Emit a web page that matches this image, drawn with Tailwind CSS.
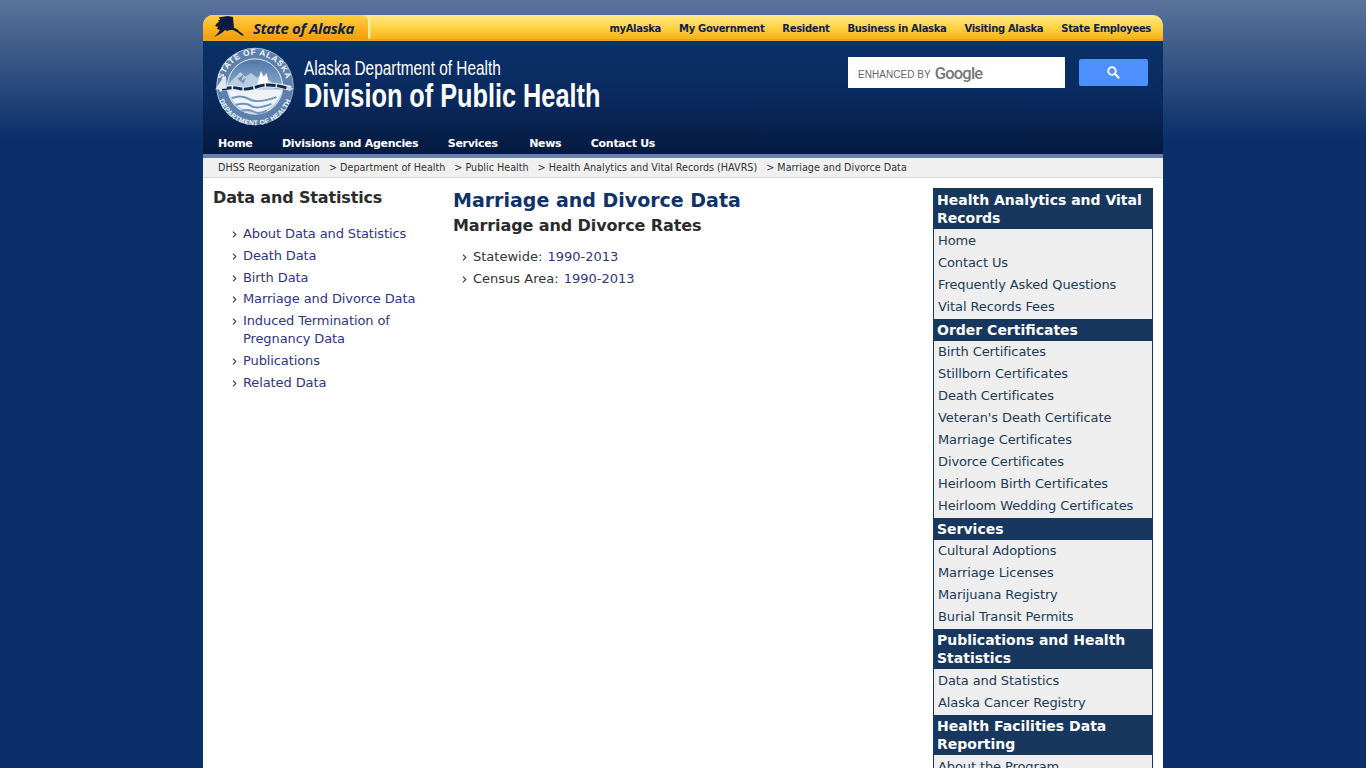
<!DOCTYPE html>
<html lang="en">
<head>
<meta charset="utf-8">
<title>Marriage and Divorce Data</title>
<script src="https://cdn.jsdelivr.net/npm/@tailwindcss/browser@4"></script>
</head>
<body class="h-[768px] overflow-hidden bg-[#0a2f6a] bg-[linear-gradient(to_bottom,#5b749b_0px,#0a2f6a_140px)] bg-no-repeat font-['DejaVu_Sans',Verdana,sans-serif]">
<div class="mx-auto w-[960px] pt-[15px]">

  <!-- top state bar -->
  <div class="relative flex h-[26px] items-center justify-end gap-[18px] overflow-hidden rounded-t-[10px] border-b-2 border-[#e0a91f] bg-[linear-gradient(to_bottom,#ffe98a,#fdd23f_55%,#f7b21a)] pr-3 pt-[3px] text-[10px] font-bold tracking-[-0.32px] text-[#10204f]">
    <div class="absolute left-0 top-0 flex h-[24px] w-[165px] items-center gap-[7px] rounded-tr-[6px] bg-[linear-gradient(to_bottom,#ffcf45,#fbb21c_60%,#f49c10)] pl-[9px] shadow-[2px_0_2px_#fff0a8]">
      <svg class="h-[23px] w-[34px] shrink-0" viewBox="0 0 34 23"><path fill="#0d1c3e" d="M9 1l7-1 5 1 1 11 3 1 3 3 3 2 1 2-3-1-4-3-4-2-3 0-3 1-2-1-2 2-3 2-6 3 4-4 2-3-3-1 1-2-3-1 2-3 2-1-1-2 2 0-1-3z"/></svg>
      <span class="mt-[2px] font-['Open_Sans',sans-serif] text-[15px] font-bold italic tracking-[-0.4px] text-[#10204f]">State of Alaska</span>
    </div>
    <a>myAlaska</a><a>My Government</a><a>Resident</a><a>Business in Alaska</a><a>Visiting Alaska</a><a>State Employees</a>
  </div>

  <!-- banner -->
  <div class="h-[113px] bg-[linear-gradient(to_bottom,#0a3169,#0a2a5e_50%,#051a40)]">
    <div class="flex h-[92px] justify-between">
      <div class="flex">
        <svg class="ml-[10px] mt-[3px] h-[82px] w-[84px] shrink-0" viewBox="0 0 84 82">
          <defs>
            <linearGradient id="ring" x1="0" y1="0" x2="1" y2="1"><stop offset="0" stop-color="#c5d3e4"/><stop offset="1" stop-color="#7f9cc0"/></linearGradient>
            <linearGradient id="sky" x1="0" y1="0" x2="0" y2="1"><stop offset="0" stop-color="#4f76a8"/><stop offset="1" stop-color="#c8d8e9"/></linearGradient>
            <path id="arcTop" d="M8 42a33.500 33.500 0 0 1 67 0"/>
            <path id="arcBot" d="M3 42a39 39 0 0 0 78 0"/>
          </defs>
          <g transform="translate(42 42.500) scale(.97) translate(-42 -41)">
            <circle cx="42" cy="41" r="40" fill="url(#ring)"/>
            <circle cx="42" cy="41" r="39" fill="#5d80ad"/>
            <circle cx="42" cy="41" r="28.500" fill="url(#sky)" stroke="#e8eef5"/>
            <path fill="#b9cce0" d="M15 38l12-12 5 5 6-4 6 5 5-3 5 4 5 3 3 5v3H15z"/>
            <path fill="#6f8db3" d="M24 33l6-4-2 6 5-3-3 6z"/>
            <path fill="#ffffff" d="M44 41l4-16 3 6 3-4 3 14z"/>
            <path fill="#eef3f8" d="M14 44h56a28.500 28.500 0 0 1-56 0z"/>
            <path fill="none" stroke="#6f93bd" stroke-width="2" d="M18 53q10-4 18 1t28-2M22 60q10-3 16 1t21-2M28 66q8-2 13 1t13-1"/>
            <path fill="none" stroke="#e8eef5" stroke-width="5" d="M5 44q10-3 20-1t20-2 34 2"/>
            <path fill="none" stroke="#12294d" stroke-width="3" stroke-dasharray="10 1.500" d="M8 44q10-3 17-1t20-2 31 2"/>
            <path fill="#dbe6f2" d="M1 44l8-12 3-2 1 13z"/>
            <path fill="#c5d3e4" d="M74 40l8 3-5 3z"/>
            <text font-family="Liberation Sans" font-size="8.500" font-weight="700" fill="#f3f7fb" letter-spacing="0.700"><textPath href="#arcTop" startOffset="50%" text-anchor="middle">STATE OF ALASKA</textPath></text>
            <text font-family="Liberation Sans" font-size="7" font-weight="700" fill="#f3f7fb" letter-spacing="0.300"><textPath href="#arcBot" startOffset="50%" text-anchor="middle">DEPARTMENT OF HEALTH</textPath></text>
          </g>
        </svg>
        <div class="ml-[7px] flex flex-col pt-[15px] font-['Liberation_Sans',sans-serif] text-white">
          <span class="origin-left scale-x-[0.77] whitespace-nowrap text-[20px] leading-[24px]">Alaska Department of Health</span>
          <span class="origin-left scale-x-[0.766] whitespace-nowrap text-[33px] font-bold leading-[31px]">Division of Public Health</span>
        </div>
      </div>
      <div class="flex pr-[15px] pt-[16px]">
        <div class="flex h-[31px] w-[217px] items-center gap-[4px] bg-white pl-[10px] pt-[3px]">
          <span class="font-['Liberation_Sans',sans-serif] text-[10px] tracking-[0.05px] text-[#666]">ENHANCED BY</span>
          <span class="font-['Roboto',sans-serif] text-[16.5px] font-medium tracking-[-0.8px] text-[#777]">Google</span>
        </div>
        <div class="ml-[14px] mt-[2px] flex h-[27px] w-[69px] items-center justify-center rounded-[2px] bg-[#4d90fe]">
          <svg class="h-[13px] w-[13px]" viewBox="0 0 13 13" fill="none" stroke="#fff" stroke-width="1.800"><circle cx="5" cy="5" r="3.800"/><path stroke-width="2.200" d="M7.800 7.800l4.400 4.400"/></svg>
        </div>
      </div>
    </div>
    <nav class="flex gap-[29.5px] pl-[15px] text-[11px] font-bold leading-[21px] tracking-[-0.3px] text-white">
      <a>Home</a><a>Divisions and Agencies</a><a>Services</a><a class="ml-[2px]">News</a><a>Contact Us</a>
    </nav>
  </div>

  <!-- breadcrumb -->
  <div class="flex h-[24px] gap-[9px] border-t-4 border-b border-t-[#6b7fae] border-b-[#d5d5d5] bg-[#f0f0f0] pl-[15px] text-[9.65px] leading-[19px] text-[#333]">
    <span>DHSS Reorganization</span><span>&gt; Department of Health</span><span>&gt; Public Health</span><span>&gt; Health Analytics and Vital Records (HAVRS)</span><span>&gt; Marriage and Divorce Data</span>
  </div>

  <!-- body -->
  <div class="flex h-[600px] overflow-hidden bg-white pt-[10px] text-[13px] leading-[18px]">
    <aside class="w-[240px] shrink-0 pl-[10px]">
      <h2 class="text-[16px] font-bold leading-[20px] tracking-[-0.15px] text-[#2b2b2b]">Data and Statistics</h2>
      <ul class="mt-[17px] tracking-[-0.1px] text-[#2f3585]">
        <li class="relative pb-[3.750px] pl-[30px]"><svg class="absolute left-[19px] top-[6px] h-[7px] w-[5px]" viewBox="0 0 5 7" fill="none" stroke="#444" stroke-width="1.200"><path d="M1 .7l2.800 2.800L1 6.300"/></svg>About Data and Statistics</li>
        <li class="relative pb-[3.750px] pl-[30px]"><svg class="absolute left-[19px] top-[6px] h-[7px] w-[5px]" viewBox="0 0 5 7" fill="none" stroke="#444" stroke-width="1.200"><path d="M1 .7l2.800 2.800L1 6.300"/></svg>Death Data</li>
        <li class="relative pb-[3.750px] pl-[30px]"><svg class="absolute left-[19px] top-[6px] h-[7px] w-[5px]" viewBox="0 0 5 7" fill="none" stroke="#444" stroke-width="1.200"><path d="M1 .7l2.800 2.800L1 6.300"/></svg>Birth Data</li>
        <li class="relative pb-[3.750px] pl-[30px]"><svg class="absolute left-[19px] top-[6px] h-[7px] w-[5px]" viewBox="0 0 5 7" fill="none" stroke="#444" stroke-width="1.200"><path d="M1 .7l2.800 2.800L1 6.300"/></svg>Marriage and Divorce Data</li>
        <li class="relative w-[210px] pb-[3.750px] pl-[30px]"><svg class="absolute left-[19px] top-[6px] h-[7px] w-[5px]" viewBox="0 0 5 7" fill="none" stroke="#444" stroke-width="1.200"><path d="M1 .7l2.800 2.800L1 6.300"/></svg>Induced Termination of Pregnancy Data</li>
        <li class="relative pb-[3.750px] pl-[30px]"><svg class="absolute left-[19px] top-[6px] h-[7px] w-[5px]" viewBox="0 0 5 7" fill="none" stroke="#444" stroke-width="1.200"><path d="M1 .7l2.800 2.800L1 6.300"/></svg>Publications</li>
        <li class="relative pb-[3.750px] pl-[30px]"><svg class="absolute left-[19px] top-[6px] h-[7px] w-[5px]" viewBox="0 0 5 7" fill="none" stroke="#444" stroke-width="1.200"><path d="M1 .7l2.800 2.800L1 6.300"/></svg>Related Data</li>
      </ul>
    </aside>
    <main class="w-[490px] shrink-0 pl-[10px]">
      <h1 class="text-[19px] font-bold leading-[24px] text-[#0f3368]">Marriage and Divorce Data</h1>
      <h2 class="mt-[2px] text-[16px] font-bold leading-[24px] tracking-[-0.1px] text-[#2b2b2b]">Marriage and Divorce Rates</h2>
      <ul class="mt-[10px] text-[#333]">
        <li class="relative pb-[4px] pl-[20px]"><svg class="absolute left-[9px] top-[6px] h-[7px] w-[5px]" viewBox="0 0 5 7" fill="none" stroke="#444" stroke-width="1.200"><path d="M1 .7l2.800 2.800L1 6.300"/></svg>Statewide: <a class="ml-[1px] text-[#2f3585]">1990-2013</a></li>
        <li class="relative pb-[4px] pl-[20px]"><svg class="absolute left-[9px] top-[6px] h-[7px] w-[5px]" viewBox="0 0 5 7" fill="none" stroke="#444" stroke-width="1.200"><path d="M1 .7l2.800 2.800L1 6.300"/></svg>Census Area: <a class="ml-[1px] text-[#2f3585]">1990-2013</a></li>
      </ul>
    </main>
    <aside class="w-[220px] shrink-0 self-start border-x border-[#17375e] bg-[#eeeeee] tracking-[-0.1px] text-[#1c3b57]">
      <h3 class="bg-[#17375e] px-[3px] pb-[2px] pt-[3px] text-[14px] font-bold leading-[18px] tracking-normal text-white">Health Analytics and Vital Records</h3>
      <ul class="pb-[1px] pl-[4px] pt-[1px]"><li class="py-[1.950px]">Home</li><li class="py-[1.950px]">Contact Us</li><li class="py-[1.950px]">Frequently Asked Questions</li><li class="py-[1.950px]">Vital Records Fees</li></ul>
      <h3 class="bg-[#17375e] px-[3px] py-[2px] text-[14px] font-bold leading-[18px] tracking-normal text-white">Order Certificates</h3>
      <ul class="pb-[1px] pl-[4px] pt-[1px]"><li class="py-[1.950px]">Birth Certificates</li><li class="py-[1.950px]">Stillborn Certificates</li><li class="py-[1.950px]">Death Certificates</li><li class="py-[1.950px]">Veteran's Death Certificate</li><li class="py-[1.950px]">Marriage Certificates</li><li class="py-[1.950px]">Divorce Certificates</li><li class="py-[1.950px]">Heirloom Birth Certificates</li><li class="py-[1.950px]">Heirloom Wedding Certificates</li></ul>
      <h3 class="bg-[#17375e] px-[3px] py-[2px] text-[14px] font-bold leading-[18px] tracking-normal text-white">Services</h3>
      <ul class="pb-[1px] pl-[4px] pt-[1px]"><li class="py-[1.950px]">Cultural Adoptions</li><li class="py-[1.950px]">Marriage Licenses</li><li class="py-[1.950px]">Marijuana Registry</li><li class="py-[1.950px]">Burial Transit Permits</li></ul>
      <h3 class="bg-[#17375e] px-[3px] py-[2px] text-[14px] font-bold leading-[18px] tracking-normal text-white">Publications and Health Statistics</h3>
      <ul class="pb-[1px] pl-[4px] pt-[1px]"><li class="py-[1.950px]">Data and Statistics</li><li class="py-[1.950px]">Alaska Cancer Registry</li></ul>
      <h3 class="bg-[#17375e] px-[3px] py-[2px] text-[14px] font-bold leading-[18px] tracking-normal text-white">Health Facilities Data Reporting</h3>
      <ul class="pb-[1px] pl-[4px] pt-[1px]"><li class="py-[1.950px]">About the Program</li></ul>
    </aside>
  </div>
</div>
</body>
</html>
